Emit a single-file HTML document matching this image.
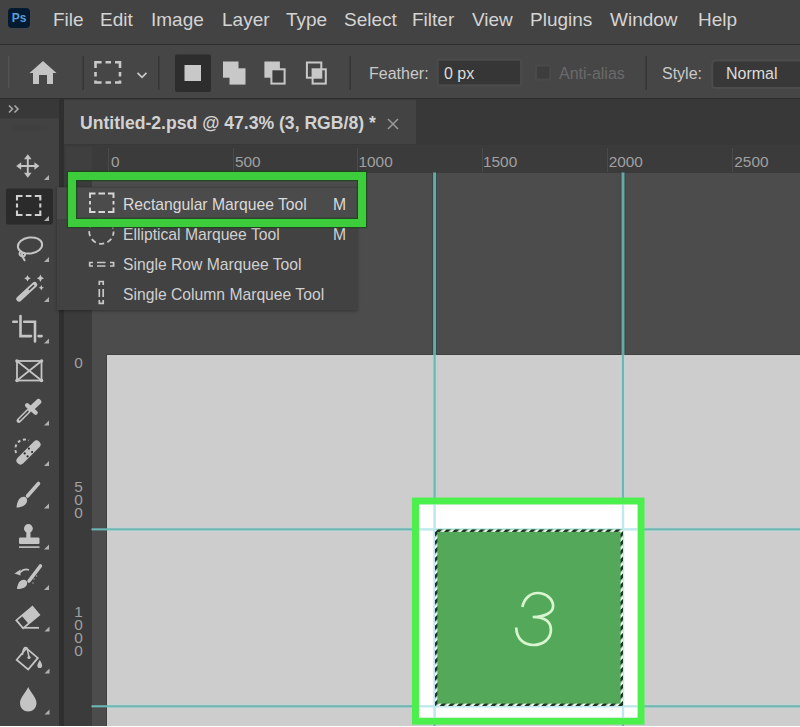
<!DOCTYPE html>
<html><head><meta charset="utf-8">
<style>
*{margin:0;padding:0;box-sizing:border-box}
html,body{width:800px;height:727px;overflow:hidden;background:#454545;font-family:"Liberation Sans",sans-serif}
.abs{position:absolute}
.mb{position:absolute;top:9px;font-size:19px;color:#d4d4d4;white-space:nowrap}
.ot{position:absolute;top:65px;font-size:16px;white-space:nowrap}
.pm{position:absolute;font-size:15.7px;color:#d0d0d0;white-space:nowrap}
.rt{position:absolute;font-size:15.4px;color:#a0a0a0;white-space:nowrap}
.rl{position:absolute;font-size:15.4px;color:#a0a0a0;width:12px;text-align:center;line-height:12.9px}
</style></head><body>
<div class="abs" style="left:0;top:0;width:800px;height:45px;background:#434343"></div>
<div class="abs" style="left:0;top:44px;width:800px;height:1px;background:#2e2e2e"></div>
<div class="abs" style="left:0;top:45px;width:800px;height:54px;background:#464646"></div>
<div class="abs" style="left:0;top:98px;width:800px;height:1px;background:#2e2e2e"></div>
<div class="abs" style="left:0;top:99px;width:59px;height:628px;background:#424242"></div>
<div class="abs" style="left:59px;top:99px;width:5px;height:628px;background:#2f2f2f"></div>
<div class="abs" style="left:64px;top:99px;width:736px;height:46px;background:#383838"></div>
<div class="abs" style="left:64px;top:100px;width:352px;height:44px;background:#434343"></div>
<div class="abs" style="left:64px;top:145px;width:736px;height:27.5px;background:#3b3b3b"></div>
<div class="abs" style="left:64px;top:172px;width:27.5px;height:555px;background:#3b3b3b"></div>
<div class="abs" style="left:66px;top:147px;width:25.5px;height:25px;background:#3f3f3f"></div>
<div class="abs" style="left:91.5px;top:172.5px;width:708.5px;height:554.5px;background:#4c4c4c"></div>
<div class="abs" style="left:107px;top:355px;width:693px;height:372px;background:#cdcdcd;box-shadow:0 0 0 1px #404040"></div>
<div class="abs" style="left:8px;top:7.5px;width:22px;height:20.5px;background:#031a30;border-radius:4px;color:#5c9dd6;font-size:12px;font-weight:bold;text-align:center;line-height:20px">Ps</div>
<span class="mb" style="left:53px">File</span>
<span class="mb" style="left:100px">Edit</span>
<span class="mb" style="left:151px">Image</span>
<span class="mb" style="left:222px">Layer</span>
<span class="mb" style="left:286px">Type</span>
<span class="mb" style="left:344px">Select</span>
<span class="mb" style="left:412px">Filter</span>
<span class="mb" style="left:472px">View</span>
<span class="mb" style="left:530px">Plugins</span>
<span class="mb" style="left:610px">Window</span>
<span class="mb" style="left:698px">Help</span>
<svg class="abs" style="left:0;top:45px" width="800" height="54">
  <rect x="8" y="11" width="1.5" height="32" fill="#5a5a5a" opacity="0.6"/>
  <path d="M43 16 L56.5 28 L53 28 L53 39 L47 39 L47 30 L39 30 L39 39 L33 39 L33 28 L29.5 28 Z" fill="#c4c4c4"/>
  <rect x="82.5" y="11" width="1.5" height="34" fill="#353535"/>
  <path d="M95.5 23 V17.3 H101.6 M105.5 17.3 H111 M115 17.3 H120 V23 M120 27 V31.5 M120 35.5 V37.5 H115 M111 37.5 H105.5 M101.6 37.5 H95.5 V35.5 M95.5 31.5 V27" fill="none" stroke="#c8c8c8" stroke-width="2.6"/>
  <path d="M137.5 27.8 L142 32.3 L146.5 27.8" fill="none" stroke="#c8c8c8" stroke-width="1.8"/>
  <rect x="158" y="11" width="1.5" height="34" fill="#353535"/>
  <rect x="175" y="9.5" width="36" height="37.5" rx="2" fill="#2d2d2d"/>
  <rect x="184.5" y="20" width="16.5" height="16" fill="#c8c8c8"/>
  <rect x="223" y="16.5" width="15.5" height="16.2" fill="#c8c8c8"/>
  <rect x="229.5" y="23.3" width="16" height="16.3" fill="#c8c8c8"/>
  <rect x="264.4" y="16.5" width="15.5" height="16.2" fill="#c8c8c8"/>
  <rect x="271.4" y="24.3" width="13.2" height="14.3" fill="#3e3e3e" stroke="#c8c8c8" stroke-width="2"/>
  <rect x="312.6" y="24.3" width="8.7" height="8.4" fill="#c8c8c8"/>
  <rect x="306.9" y="17.5" width="14.4" height="15.2" fill="none" stroke="#c8c8c8" stroke-width="2"/>
  <rect x="312.6" y="24.3" width="13.2" height="14.3" fill="none" stroke="#c8c8c8" stroke-width="2"/>
  <rect x="349.5" y="11" width="1.5" height="34" fill="#353535"/>
  <rect x="437.55" y="14.5" width="83.7" height="26.05" rx="1.5" fill="#363636" stroke="#4a4a4a" stroke-width="2.5"/>
  <rect x="536" y="20.4" width="14.25" height="14.2" rx="1" fill="#3d3d3d" stroke="#4a4a4a" stroke-width="2"/>
  <rect x="645.5" y="11" width="1.5" height="34" fill="#353535"/>
  <rect x="712.25" y="15.4" width="100" height="27.6" rx="3" fill="#383838" stroke="#4c4c4c" stroke-width="2"/>
</svg>
<span class="ot" style="left:369px;color:#c9c9c9">Feather:</span>
<span class="ot" style="left:444px;color:#dcdcdc">0 px</span>
<span class="ot" style="left:559px;color:#6a6a6a">Anti-alias</span>
<span class="ot" style="left:662px;color:#c9c9c9">Style:</span>
<span class="ot" style="left:726px;color:#dcdcdc">Normal</span>
<div class="abs" style="left:80px;top:113px;font-size:17.6px;font-weight:bold;color:#d2d2d2;white-space:nowrap">Untitled-2.psd @ 47.3% (3, RGB/8) *</div>
<svg class="abs" style="left:386px;top:117px" width="14" height="14"><path d="M2 2 L12 12 M12 2 L2 12" stroke="#9a9a9a" stroke-width="1.5"/></svg>
<svg class="abs" style="left:0;top:0" width="800" height="727"><rect x="108" y="148" width="1" height="24" fill="#4a4a4a"/><rect x="233" y="148" width="1" height="24" fill="#4a4a4a"/><rect x="357" y="148" width="1" height="24" fill="#4a4a4a"/><rect x="482" y="148" width="1" height="24" fill="#4a4a4a"/><rect x="607" y="148" width="1" height="24" fill="#4a4a4a"/><rect x="732" y="148" width="1" height="24" fill="#4a4a4a"/></svg>
<span class="rt" style="left:111px;top:153px">0</span>
<span class="rt" style="left:235px;top:153px">500</span>
<span class="rt" style="left:358.5px;top:153px">1000</span>
<span class="rt" style="left:483px;top:153px">1500</span>
<span class="rt" style="left:608.7px;top:153px">2000</span>
<span class="rt" style="left:734.3px;top:153px">2500</span>
<div class="rl" style="left:72.5px;top:357px">0</div>
<div class="rl" style="left:72.5px;top:481px">5<br>0<br>0</div>
<div class="rl" style="left:72.5px;top:606px">1<br>0<br>0<br>0</div>
<svg class="abs" style="left:0;top:0" width="800" height="727">
  <g fill="#b8dcdc" opacity="0.35">
    <rect x="432.1" y="355" width="5" height="372"/>
    <rect x="620.5" y="355" width="5" height="372"/>
    <rect x="107" y="526.85" width="693" height="5"/>
    <rect x="107" y="703.8" width="693" height="5"/>
  </g>
  <g fill="#2c4444">
    <rect x="432.3" y="172.5" width="4.6" height="182.5"/>
    <rect x="620.7" y="172.5" width="4.6" height="182.5"/>
  </g>
  <g fill="#6ea6a4">
    <rect x="433.1" y="172.5" width="3" height="182.5"/>
    <rect x="621.5" y="172.5" width="3" height="182.5"/>
  </g>
  <g fill="#6cb6b4">
    <rect x="433.5" y="355" width="2.2" height="372"/>
    <rect x="621.9" y="355" width="2.1" height="372"/>
    <rect x="91.5" y="528.3" width="708.5" height="2.1"/>
    <rect x="91.5" y="705.25" width="708.5" height="2.1"/>
  </g>
  <rect x="415.5" y="501.1" width="225.5" height="220" fill="none" stroke="#4cf04c" stroke-width="7"/>
  <rect x="419" y="504.6" width="218.5" height="213" fill="#ffffff"/>
  <g fill="#b0e4ea" opacity="0.8">
    <rect x="433.3" y="504.6" width="2.6" height="213"/>
    <rect x="621.8" y="504.6" width="2.4" height="213"/>
    <rect x="419" y="528.15" width="218.5" height="2.4"/>
    <rect x="419" y="705.1" width="218.5" height="2.4"/>
  </g>
  <rect x="435" y="529.5" width="188" height="176.5" fill="#53a85a"/>
  <defs><pattern id="ants" patternUnits="userSpaceOnUse" width="6" height="6" patternTransform="rotate(45)"><rect width="6" height="6" fill="#eef8ee"/><rect width="3.3" height="6" fill="#1c3424"/></pattern></defs>
  <rect x="436.2" y="530.7" width="185.6" height="174.1" fill="none" stroke="url(#ants)" stroke-width="2.4"/>
  <path d="M522.4 607.1 C524 598 531 593 537.6 593 C546 593 553.1 599 553.1 605.9 C553.1 612 546 617 532.7 617 C545 617 550.9 622 550.9 630 C550.9 639 543 645 533.3 645 C524 645 516.5 639 516.2 627.5" fill="none" stroke="#d8f5d0" stroke-width="2.7"/>
</svg>
<svg class="abs" style="left:0;top:0" width="64" height="727">
  <rect x="0" y="99" width="59" height="19.5" fill="#383838"/>
  <path d="M9 105.5 L12.5 109 L9 112.5 M14.5 105.5 L18 109 L14.5 112.5" fill="none" stroke="#a8a8a8" stroke-width="1.6"/>
  <rect x="13" y="125" width="34" height="6" fill="#3d3d3d" opacity="0.3"/>
  <g fill="none" stroke="#c4c4c4" stroke-width="1.9"><path d="M27.8 157 V176 M18 166 H37.6"/></g>
  <path d="M27.8 154.2 L31.6 159.2 L24 159.2 Z M27.8 177.8 L31.6 172.8 L24 172.8 Z M16.2 166 L21.2 162.2 L21.2 169.8 Z M39.4 166 L34.4 162.2 L34.4 169.8 Z" fill="#c4c4c4"/>
  <path d="M49 175 L49 180 L44 180 Z" fill="#b0b0b0"/>
  <rect x="6" y="188.5" width="47" height="36" rx="2" fill="#2b2b2b"/>
  <path d="M17 200.5 V196 H22.5 M25.8 196 H31.5 M34.8 196 H40.3 V200.5 M40.3 203.5 V207.5 M40.3 210.5 V215 H34.8 M31.5 215 H25.8 M22.5 215 H17 V210.5 M17 207.5 V203.5" fill="none" stroke="#d0d0d0" stroke-width="2.1"/>
  <path d="M49 216 L49 221 L44 221 Z" fill="#b0b0b0"/>
  <g fill="none" stroke="#c4c4c4" stroke-width="2">
    <ellipse cx="30" cy="245.5" rx="12.2" ry="8" transform="rotate(-8 30 245.5)"/>
    <path d="M21 251 q-3 3 0 5 q3 2 4 -1 q0 -3 -3 -2 q0 4 3 8"/>
  </g>
  <path d="M49 257 L49 262 L44 262 Z" fill="#b0b0b0"/>
  <path d="M19 299 L34.5 284.7" stroke="#c4c4c4" stroke-width="5.4" stroke-linecap="round"/>
  <path d="M29.3 289.5 L33.6 285.5" stroke="#3a3a3a" stroke-width="1.6" stroke-linecap="round"/>
  <g fill="#c4c4c4">
    <path d="M27.5 275 L28.6 277.2 L30.8 278.3 L28.6 279.4 L27.5 281.6 L26.4 279.4 L24.2 278.3 L26.4 277.2 Z"/>
    <path d="M40.4 274.5 L41.6 277 L44 278.3 L41.6 279.6 L40.4 282 L39.2 279.6 L36.8 278.3 L39.2 277 Z"/>
    <path d="M41.3 285 L42.2 287 L44 287.8 L42.2 288.6 L41.3 290.5 L40.4 288.6 L38.6 287.8 L40.4 287 Z"/>
  </g>
  <path d="M49 297 L49 302 L44 302 Z" fill="#b0b0b0"/>
  <g fill="none" stroke="#c4c4c4" stroke-width="2.6" stroke-linecap="round">
    <path d="M13.3 321.8 H16.8 M20.5 316 V336.1 H31 M24.2 321.8 H35 V341.4 M38.6 336.1 H41.6"/>
  </g>
  <path d="M49 338.5 L49 343.5 L44 343.5 Z" fill="#b0b0b0"/>
  <g fill="none" stroke="#c4c4c4" stroke-width="1.8">
    <rect x="17" y="361" width="24.5" height="19.5"/>
    <path d="M17 361 L41.5 380.5 M41.5 361 L17 380.5"/>
  </g>
  <g fill="#c4c4c4"><circle cx="17" cy="361" r="1.8"/><circle cx="41.5" cy="361" r="1.8"/><circle cx="17" cy="380.5" r="1.8"/><circle cx="41.5" cy="380.5" r="1.8"/></g>
  <path d="M18.8 420.6 L29 410.4" stroke="#c4c4c4" stroke-width="4.6" stroke-linecap="round"/>
  <path d="M19.6 419.8 L28 411.4" stroke="#424242" stroke-width="1.5" stroke-linecap="round"/>
  <path d="M27.2 405.3 L35.6 412.6" stroke="#c4c4c4" stroke-width="4.4" stroke-linecap="round"/>
  <path d="M32.4 407.5 L38.5 401.8" stroke="#c4c4c4" stroke-width="5.6" stroke-linecap="round"/>
  <path d="M49 420.5 L49 425.5 L44 425.5 Z" fill="#b0b0b0"/>
  <path d="M20.5 460.5 L36.5 444.5" stroke="#c4c4c4" stroke-width="8" stroke-linecap="round"/>
  <g fill="#2e2e2e"><circle cx="28.9" cy="448.6" r="1.1"/><circle cx="24.7" cy="453.4" r="1.1"/><circle cx="32.1" cy="452" r="1.1"/><circle cx="27.6" cy="456.4" r="1.1"/></g>
  <path d="M16.2 453 A9.5 9.5 0 0 1 29 440.5" fill="none" stroke="#c4c4c4" stroke-width="1.9" stroke-dasharray="3 2.6"/>
  <path d="M49 461 L49 466 L44 466 Z" fill="#b0b0b0"/>
  <path d="M27.5 496 L38.5 483.5" stroke="#c4c4c4" stroke-width="3.6" stroke-linecap="round"/>
  <path d="M16.5 507.5 C17 501 20 496 25 497 C28 498 28 503 24 505.5 C21.5 507 19 507.5 16.5 507.5 Z" fill="#c4c4c4"/>
  <path d="M49 503.5 L49 508.5 L44 508.5 Z" fill="#b0b0b0"/>
  <circle cx="28.4" cy="528.5" r="4.4" fill="#c4c4c4"/>
  <rect x="26.3" y="531" width="4.2" height="7" fill="#c4c4c4"/>
  <rect x="19" y="537.5" width="20.5" height="6.5" rx="1.2" fill="#c4c4c4"/>
  <rect x="19" y="546.3" width="20.5" height="1.6" fill="#c4c4c4"/>
  <path d="M49 544.5 L49 549.5 L44 549.5 Z" fill="#b0b0b0"/>
  <path d="M29 581 L40.4 566" stroke="#c4c4c4" stroke-width="3.6" stroke-linecap="round"/>
  <path d="M17 589 C17.5 583 20.5 579 25 580 C28 581 28 585 24.5 587.5 C22 589 19.5 589 17 589 Z" fill="#c4c4c4"/>
  <path d="M20 572.5 Q24 568 29 570" fill="none" stroke="#c4c4c4" stroke-width="1.6"/>
  <path d="M14.5 573.5 L20.5 569.5 L20.5 575.5 Z" fill="#c4c4c4"/>
  <g fill="#9a9a9a"><circle cx="34" cy="579" r="0.8"/><circle cx="36.5" cy="576" r="0.8"/><circle cx="33" cy="583" r="0.8"/></g>
  <path d="M49 585 L49 590 L44 590 Z" fill="#b0b0b0"/>
  <g transform="rotate(-40 28 617)">
    <rect x="17" y="612" width="21" height="10.5" fill="none" stroke="#c4c4c4" stroke-width="1.8"/>
    <rect x="24" y="612" width="14" height="10.5" fill="#c4c4c4"/>
  </g>
  <path d="M24 627.8 H39" stroke="#c4c4c4" stroke-width="1.8"/>
  <path d="M49.5 626.5 L49.5 631.5 L44.5 631.5 Z" fill="#b0b0b0"/>
  <g transform="rotate(40 27 660)">
    <rect x="19" y="651.5" width="15" height="15" fill="none" stroke="#c4c4c4" stroke-width="1.8"/>
  </g>
  <path d="M22.5 655 Q23 646 27 648 L29 657" fill="none" stroke="#c4c4c4" stroke-width="1.5"/>
  <circle cx="29" cy="657.5" r="1.6" fill="#c4c4c4"/>
  <path d="M39.8 660 C41.5 663 42.5 664.5 42 666.5 C41.5 668.5 38 668.5 37.5 666.5 C37 664.5 38 663 39.8 660 Z" fill="#c4c4c4"/>
  <path d="M49.5 668.5 L49.5 673.5 L44.5 673.5 Z" fill="#b0b0b0"/>
  <path d="M28.2 687 C30.5 692 36.5 698 36.5 703 C36.5 708 32.5 711.5 28.2 711.5 C24 711.5 20 708 20 703 C20 698 26 692 28.2 687 Z" fill="#c4c4c4"/>
  <path d="M49.5 709.5 L49.5 714.5 L44.5 714.5 Z" fill="#b0b0b0"/>
</svg>
<div class="abs" style="left:57px;top:187px;width:300px;height:123px;background:#424242;box-shadow:0 1px 3px rgba(0,0,0,0.35)"></div>
<div class="abs" style="left:57px;top:188px;width:300px;height:31px;background:#4b4b4b"></div>
<svg class="abs" style="left:0;top:0" width="130" height="320">
<g fill="none" stroke-width="1.9">
  <path d="M90 198 V193.5 H95.5 M98.5 193.5 H105 M108 193.5 H113.5 V198 M113.5 201 V204.5 M113.5 207.5 V212 H108 M105 212 H98.5 M95.5 212 H90 V207.5 M90 204.5 V201" stroke="#d8d8d8"/>
  <circle cx="101.4" cy="231.6" r="12.2" stroke-dasharray="5.2 3.4" stroke-dashoffset="1" stroke="#c8c8c8" stroke-width="1.8"/>
  <path d="M93 262.5 H89.7 V266 H93 M97 262.5 H105.5 M97 266 H105.5 M110 262.5 H113.6 V266 H110" stroke="#c8c8c8" stroke-width="1.7"/>
  <path d="M99.3 285 V281.5 H103.2 V285 M99.3 289 V297 M103.2 289 V297 M99.3 300 V303.3 H103.2 V300" stroke="#c8c8c8" stroke-width="1.7"/>
</g>
</svg>
<div class="pm" style="left:123px;top:196.3px;color:#dadada">Rectangular Marquee Tool</div>
<div class="pm" style="left:333px;top:196.3px;color:#dadada">M</div>
<div class="pm" style="left:123px;top:226px">Elliptical Marquee Tool</div>
<div class="pm" style="left:333px;top:226px">M</div>
<div class="pm" style="left:123px;top:256px">Single Row Marquee Tool</div>
<div class="pm" style="left:123px;top:286px">Single Column Marquee Tool</div>
<div class="abs" style="left:68.25px;top:171.6px;width:297.6px;height:55.6px;border:8.4px solid #3ccc3c;box-shadow:0 0 0 1.2px rgba(25,70,25,0.75), inset 0 0 0 1.2px rgba(25,70,25,0.75)"></div>
<div class="abs" style="left:0;top:725.6px;width:800px;height:1.4px;background:#ffffff"></div>
</body></html>
